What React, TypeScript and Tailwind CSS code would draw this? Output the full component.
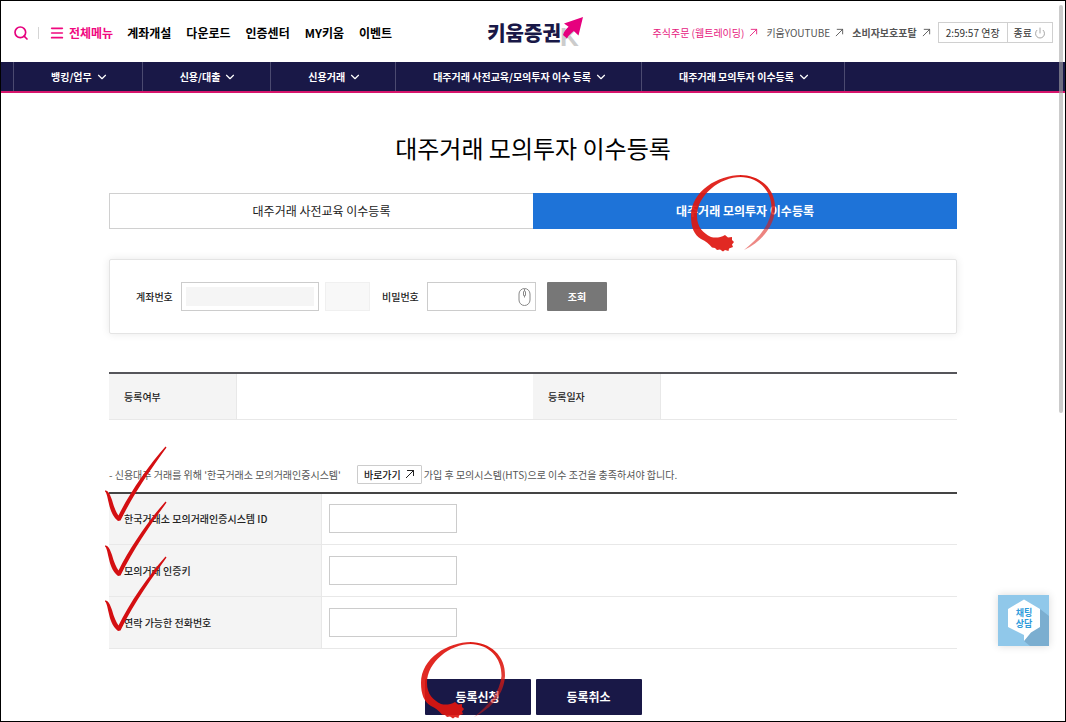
import { ChevronDown, Menu, Power, Search } from 'lucide-react'

import type { JSX } from 'react'

const mainMenu = ['계좌개설', '다운로드', '인증센터', 'MY키움', '이벤트']

const subMenu = [
  '뱅킹/업무',
  '신용/대출',
  '신용거래',
  '대주거래 사전교육/모의투자 이수 등록',
  '대주거래 모의투자 이수등록',
]

const formRows = [
  { id: 'krx-id', label: '한국거래소 모의거래인증시스템 ID' },
  { id: 'krx-key', label: '모의거래 인증키' },
  { id: 'phone', label: '연락 가능한 전화번호' },
]

function OutArrow({ className }: { className?: string }): JSX.Element {
  return (
    <svg
      viewBox="0 0 10 10"
      className={className ?? 'size-[9px]'}
      fill="none"
      stroke="currentColor"
    >
      <path d="M2 1.500h6.900M8.500 1.500v5.500M8.500 1.500L1 9" />
    </svg>
  )
}

function Logo(): JSX.Element {
  return (
    <a href="#" className="flex items-center pl-[6px] text-[#191847]">
      <span className="text-xl leading-7 font-black">키움증권</span>
      <svg viewBox="0 -2 26 36" className="-ml-[2px] h-9 w-[26px]">
        <text
          x="1"
          y="29"
          fill="#cccccc"
          fontFamily="Liberation Sans, sans-serif"
          fontSize="26"
          fontWeight="700"
        >
          K
        </text>
        <path
          d="M24 0L5 6.500l4.600 3.200C7 12 5 14.500 4 18l4 3.500c1.500-3 4-5.300 6.800-7.500l4.700 4.500z"
          fill="#e6007e"
        />
      </svg>
    </a>
  )
}

// red brush ring drawn over the control to press
function BrushRing({
  id,
  className,
}: {
  id: string
  className: string
}): JSX.Element {
  return (
    <svg
      viewBox="0 0 90 80"
      className={`pointer-events-none absolute z-10 h-20 w-[90px] max-w-none ${className}`}
    >
      <defs>
        <linearGradient id={id} x1="0" y1="0" x2="0" y2="1">
          <stop offset="0" stopColor="#dd1a12" />
          <stop offset="0.450" stopColor="#dd1a12" stopOpacity="0.850" />
          <stop offset="0.700" stopColor="#dd1a12" stopOpacity="0.550" />
          <stop offset="1" stopColor="#dd1a12" stopOpacity="0.500" />
        </linearGradient>
      </defs>
      <path
        d="M52 2C72 2 88 16 87 36C86 54 74 68 56 77C71 65 82 52 83.500 36C84 18 71 4 52 4z"
        fill={`url(#${id})`}
      />
      <path
        d="M53 2C30 2 3 18 3 43C3 54 6 62 13 66C18 68 21 71 24 74.500L27 75L29 77L32 76.500L35 78.500L37 77L40.500 78L41 75.500L45 74L44 71.500L46 69L44 67L44 64L40 64.500L37 62C32 65 27 65 23 64C15 60 9 54 9 43C9 22 32 4 53 4z"
        fill="#de1710"
        fillOpacity="0.920"
      />
    </svg>
  )
}

function CheckMarks(): JSX.Element {
  return (
    <svg
      viewBox="0 0 64 188"
      className="pointer-events-none absolute -top-[46px] -left-[5px] z-10 h-[188px] w-16"
      fill="#d40f12"
    >
      {[0, 55, 110].map((y) => (
        <path
          key={y}
          transform={`translate(0 ${y})`}
          d="M1 44.500C4 44 6 48 8 54C10 61 12 66 14.500 69.500C25 48 44 20 61.500 0.500L62.500 1.500C50 19 31 45 16.500 74.500L14 75C8 70 6 63 4.500 56C3.500 51 2.500 46.500 1 45.500z"
        />
      ))}
    </svg>
  )
}

function Header(): JSX.Element {
  return (
    <header>
      <div className="grid h-[61px] grid-cols-[1fr_auto_1fr] items-center px-3 pt-[2px]">
        <div className="flex items-center text-xs font-bold whitespace-nowrap text-black">
          <button aria-label="검색" className="text-[#e6007e]">
            <Search className="size-4" strokeWidth={2.5} />
          </button>
          <span className="ml-[9px] h-3 w-px bg-[#d5d5d5]" />
          <button className="ml-[10px] flex items-center gap-1 text-[#f0087f]">
            <Menu className="size-4" strokeWidth={2.5} />
            전체메뉴
          </button>
          <nav className="ml-[14px] flex gap-[15px]">
            {mainMenu.map((item) => (
              <a key={item} href="#">
                {item}
              </a>
            ))}
          </nav>
        </div>
        <Logo />
        <div className="flex items-center justify-end text-[10px] whitespace-nowrap text-[#555]">
          <a href="#" className="flex items-center gap-[5px] text-[#e6207e]">
            주식주문 (웹트레이딩) <OutArrow />
          </a>
          <a href="#" className="ml-2 flex items-center gap-[5px]">
            키움YOUTUBE <OutArrow />
          </a>
          <a href="#" className="ml-2 flex items-center gap-[5px] font-bold">
            소비자보호포탈 <OutArrow />
          </a>
          <div className="ml-[7px] flex h-[21px] items-stretch border border-[#d0d0d0] text-[#333]">
            <button className="border-r border-[#d0d0d0] px-[7px]">
              2:59:57 연장
            </button>
            <button className="flex items-center gap-[2px] px-[6px]">
              종료 <Power className="size-3 text-[#888]" strokeWidth={1.5} />
            </button>
          </div>
        </div>
      </div>
      <nav className="flex h-[31px] border-b-2 border-[#d6156c] bg-[#191847] pl-3 text-[10px] font-bold whitespace-nowrap text-white">
        {subMenu.map((item) => (
          <a
            key={item}
            href="#"
            className="flex items-center gap-[3px] border-l border-[#4b4a70] pr-[33px] pl-[37px] last:border-r"
          >
            {item}
            <ChevronDown className="size-[14px]" strokeWidth={2} />
          </a>
        ))}
      </nav>
    </header>
  )
}

function AccountSearch(): JSX.Element {
  const field = 'h-[29px] border border-[#ccc] bg-white'
  return (
    <form className="mt-[30px] flex h-[75px] items-center rounded-[2px] border border-[#e4e4e4] px-[26px] text-[10px] font-medium shadow-[0_0_8px_rgba(0,0,0,0.09)]">
      <label htmlFor="account" className="w-[45px]">
        계좌번호
      </label>
      <div className={`${field} flex w-[138px] p-1`}>
        <input id="account" className="w-full bg-[#f5f5f5] outline-none" />
      </div>
      <input
        aria-label="계좌 구분"
        className="ml-[6px] h-[29px] w-[45px] border border-[#f0f0f0] bg-[#f8f8f8]"
      />
      <label htmlFor="password" className="ml-3 w-[45px]">
        비밀번호
      </label>
      <div className={`${field} flex w-[109px] items-center pr-[4px]`}>
        <input
          id="password"
          type="password"
          className="min-w-0 flex-1 outline-none"
        />
        <svg
          viewBox="0 0 13 18"
          className="h-[18px] w-[13px]"
          fill="none"
          stroke="#888"
        >
          <rect x="1" y="0.500" width="11" height="17" rx="5.500" />
          <path d="M6.500 1v2M6.500 7.500v2" />
          <rect x="5.500" y="3" width="2" height="5" rx="1" />
        </svg>
      </div>
      <button
        type="button"
        className="ml-[11px] h-[29px] w-[60px] rounded-[1px] bg-[#777] font-bold text-white"
      >
        조회
      </button>
    </form>
  )
}

function StatusTable(): JSX.Element {
  const head =
    'w-[15%] border-r border-[#e8e8e8] bg-[#f4f4f4] px-[15px] text-left font-medium'
  return (
    <table className="mt-[38px] w-full table-fixed border-collapse text-[10px]">
      <tbody>
        <tr className="h-[46px] border-t-2 border-b border-t-[#55555a] border-b-[#e8e8e8]">
          <th className={head}>등록여부</th>
          <td className="w-[35%]" />
          <th className={head}>등록일자</th>
          <td />
        </tr>
      </tbody>
    </table>
  )
}

function RegisterForm(): JSX.Element {
  return (
    <section>
      <p className="mt-[45px] flex h-[19px] items-center text-[10px] text-[#555]">
        - 신용대주 거래를 위해 '한국거래소 모의거래인증시스템'
        <a
          href="#"
          className="mr-[2px] ml-4 flex h-[19px] w-[65px] items-center justify-center gap-1 rounded-[1px] border border-[#ccc] font-medium text-[#222]"
        >
          바로가기 <OutArrow className="size-[10px]" />
        </a>
        가입 후 모의시스템(HTS)으로 이수 조건을 충족하셔야 합니다.
      </p>
      <div className="relative mt-2">
        <CheckMarks />
        <table className="w-full table-fixed border-collapse border-t-2 border-t-[#444] text-[10px]">
          <tbody>
            {formRows.map((row) => (
              <tr key={row.id} className="h-[52px] border-b border-[#e8e8e8]">
                <th className="w-1/4 border-r border-[#e8e8e8] bg-[#f4f4f4] px-[15px] text-left font-medium">
                  <label htmlFor={row.id}>{row.label}</label>
                </th>
                <td className="px-[7px]">
                  <input
                    id={row.id}
                    className="block h-[29px] w-32 border border-[#ccc] px-2"
                  />
                </td>
              </tr>
            ))}
          </tbody>
        </table>
      </div>
      <div className="mt-[30px] flex justify-center gap-[5px] text-xs font-bold text-white">
        <div className="relative">
          <button className="h-9 w-[106px] rounded-[1px] bg-[#191847]">
            등록신청
          </button>
          <BrushRing id="ring-submit" className="-top-[39px] -left-[7px]" />
        </div>
        <button className="h-9 w-[106px] rounded-[1px] bg-[#191847]">
          등록취소
        </button>
      </div>
    </section>
  )
}

function ChatButton(): JSX.Element {
  return (
    <button className="absolute right-4 bottom-[75px] size-[51px] shadow-[0_0_8px_rgba(0,0,0,0.15)]">
      <svg viewBox="0 0 51 51" className="size-full">
        <rect width="51" height="51" fill="#90c8ea" />
        <path d="M42 14L51 21V51H32L26 46z" fill="#7baed0" />
        <path
          d="M26 4.500L42 14V32L33 37.500L26 46V40L10 32V14z"
          fill="#fff"
        />
        <text
          fill="#2f9bdb"
          fontFamily="Noto Sans CJK KR, sans-serif"
          fontSize="9"
          fontWeight="700"
          textAnchor="middle"
        >
          <tspan x="26" y="21">
            채팅
          </tspan>
          <tspan x="26" y="32">
            상담
          </tspan>
        </text>
      </svg>
    </button>
  )
}

export default function App(): JSX.Element {
  return (
    <div className="relative min-h-screen border border-black bg-white font-['Noto_Sans_CJK_KR',sans-serif] text-[#222]">
      <Header />
      <main className="mx-auto w-full max-w-[848px] pb-[6px]">
        <h1 className="mt-[37px] text-center text-2xl leading-9 text-black">
          대주거래 모의투자 이수등록
        </h1>
        <div className="mt-[27px] grid grid-cols-2 text-xs">
          <button className="h-9 border border-r-0 border-[#d0d0d0]">
            대주거래 사전교육 이수등록
          </button>
          <div className="relative">
            <button className="h-9 w-full bg-[#1e73d8] font-bold text-white">
              대주거래 모의투자 이수등록
            </button>
            <BrushRing id="ring-tab" className="-top-5 left-[155px]" />
          </div>
        </div>
        <AccountSearch />
        <StatusTable />
        <RegisterForm />
      </main>
      <ChatButton />
      <div className="absolute top-1 right-[2px] h-[408px] w-1 rounded-full bg-[#a8a8a8]/60" />
    </div>
  )
}
